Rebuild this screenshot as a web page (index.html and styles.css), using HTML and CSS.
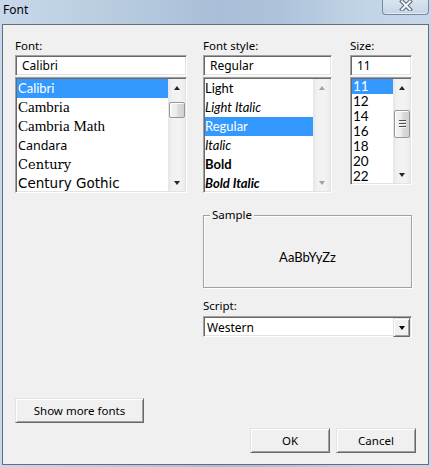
FILE: index.html
```html
<!DOCTYPE html>
<html>
<head>
<meta charset="utf-8">
<title>Font</title>
<link rel="stylesheet" href="styles.css">
</head>
<body>
<div class="window">
  <div class="titlebar">
    <span class="title">Font</span>
    <div class="close">
      <svg width="14" height="11" viewBox="0 0 14 11">
        <path d="M3 1.5 L11 9.5 M11 1.5 L3 9.5" stroke="#5b6778" stroke-width="4" stroke-linecap="square" fill="none"/>
        <path d="M3 1.5 L11 9.5 M11 1.5 L3 9.5" stroke="#f4f7fb" stroke-width="2" stroke-linecap="square" fill="none"/>
      </svg>
    </div>
  </div>
  <div class="panel">
    <div class="top">
      <div class="col col-font">
        <div class="lbl">Font:</div>
        <div class="field">Calibri</div>
        <div class="list list-font">
          <ul class="items">
            <li class="sel f-calibri">Calibri</li>
            <li class="f-cambria">Cambria</li>
            <li class="f-cambria">Cambria Math</li>
            <li class="f-candara">Candara</li>
            <li class="f-century">Century</li>
            <li class="f-gothic">Century Gothic</li>
          </ul>
          <div class="sb">
            <div class="sb-btn"><span class="arr-up"></span></div>
            <div class="sb-track"><div class="thumb thumb-font"></div></div>
            <div class="sb-btn"><span class="arr-down"></span></div>
          </div>
        </div>
      </div>
      <div class="right">
        <div class="pair">
          <div class="col col-style">
            <div class="lbl">Font style:</div>
            <div class="field">Regular</div>
            <div class="list list-style">
              <ul class="items items-style">
                <li class="w-light">Light</li>
                <li class="w-light it">Light Italic</li>
                <li class="sel">Regular</li>
                <li class="it">Italic</li>
                <li class="bold">Bold</li>
                <li class="bold it">Bold Italic</li>
              </ul>
              <div class="sb sb-disabled">
                <div class="sb-btn"><span class="arr-up"></span></div>
                <div class="sb-track"></div>
                <div class="sb-btn"><span class="arr-down"></span></div>
              </div>
            </div>
          </div>
          <div class="col col-size">
            <div class="lbl">Size:</div>
            <div class="field">11</div>
            <div class="list list-size">
              <ul class="items items-size">
                <li class="sel">11</li>
                <li>12</li>
                <li>14</li>
                <li>16</li>
                <li>18</li>
                <li>20</li>
                <li>22</li>
              </ul>
              <div class="sb">
                <div class="sb-btn"><span class="arr-up"></span></div>
                <div class="sb-track"><div class="thumb thumb-size"><span class="grip"></span></div></div>
                <div class="sb-btn"><span class="arr-down"></span></div>
              </div>
            </div>
          </div>
        </div>
        <div class="sample">
          <span class="legend">Sample</span>
          <span class="sample-text">AaBbYyZz</span>
        </div>
        <div class="lbl lbl-script">Script:</div>
        <div class="combo">
          <span class="combo-text">Western</span>
          <span class="combo-btn"><span class="arr-down"></span></span>
        </div>
      </div>
    </div>
    <div class="more-row"><button class="btn btn-more">Show more fonts</button></div>
    <div class="actions">
      <button class="btn btn-act">OK</button>
      <button class="btn btn-act">Cancel</button>
    </div>
  </div>
</div>
</body>
</html>
```

FILE: styles.css
```css
* { box-sizing: border-box; margin: 0; padding: 0; }
html, body { width: 431px; height: 467px; overflow: hidden; }
body {
  font-family: "Noto Sans", "Open Sans", sans-serif;
  font-size: 11.5px;
  color: #000;
  background: linear-gradient(90deg, #c7d8ea 0%, #b9cce0 25%, #a9bfd7 50%, #aec3da 65%, #c2d4e7 85%, #c6d7e9 100%);
}
.window { display: flex; flex-direction: column; height: 467px; }
.titlebar { position: relative; height: 24px; flex: none; }
.title { display: block; padding-left: 3px; line-height: 20px; font-size: 12px; }
.close {
  position: absolute; top: 0; right: 2px;
  width: 47px; height: 15px;
  border: 1px solid #7588a0; border-top: none;
  border-radius: 0 0 4px 4px;
  background: linear-gradient(#d9e5f1, #c5d5e6);
  box-shadow: inset 0 -1px 0 rgba(255,255,255,0.5);
  display: flex; justify-content: center; align-items: flex-start;
}
.close svg { display: block; }
.panel {
  flex: 1;
  margin: 0 2px 2px 2px;
  border: 1px solid #636e7c;
  background: #f0f0f0;
  padding: 13px 12px 0 12px;
  display: flex; flex-direction: column;
}
.top { display: flex; gap: 16px; }
.col-font { width: 172px; }
.right { width: 209px; display: flex; flex-direction: column; }
.pair { display: flex; gap: 18px; }
.col-style { width: 129px; }
.col-size { width: 62px; }
.lbl { height: 16px; line-height: 16px; margin-bottom: 1px; }
.field, .list, .combo {
  background: #fff;
  border: 1px solid;
  border-color: #a0a0a0 #fff #fff #a0a0a0;
  box-shadow: inset 1px 1px 0 #696969, inset -1px -1px 0 #e3e3e3;
}
.field {
  height: 21px; margin-bottom: 1px;
  padding-left: 6px; line-height: 19px; font-size: 12px;
}
.list { display: flex; padding: 1px; overflow: hidden; }
.list-font, .list-style { height: 116px; }
.list-size { height: 108px; }
.items { flex: 1; list-style: none; overflow: hidden; min-width: 0; }
.items li { height: 19px; line-height: 19px; padding-left: 1px; white-space: nowrap; }
.items li.sel { background: #3399ff; color: #fff; }
.f-calibri { font-family: Lato, sans-serif; font-size: 13px; }
.f-cambria { font-family: "Liberation Serif", serif; font-size: 15px; }
.f-candara { font-family: "Noto Sans", sans-serif; font-size: 12.5px; }
.f-century { font-family: "DejaVu Serif", serif; font-size: 13px; }
.f-gothic { font-family: "DejaVu Sans", sans-serif; font-size: 13.5px; }
.items-style li { font-family: Lato, sans-serif; font-size: 13px; padding-left: 0; }
.w-light { font-weight: 400; }
.it { font-style: italic; }
.bold { font-weight: 700; }
.items-size li { height: 15px; line-height: 15px; font-family: Lato, sans-serif; font-size: 13.5px; }
.sb {
  width: 17px; flex: none;
  display: flex; flex-direction: column;
  background: linear-gradient(90deg, #e6e6e6, #f1f1f1 25%, #f3f3f3 70%, #ebebeb);
}
.sb-btn { height: 17px; flex: none; display: flex; align-items: center; justify-content: center; }
.sb-track { flex: 1; }
.arr-up, .arr-down { width: 0; height: 0; border-left: 3.5px solid transparent; border-right: 3.5px solid transparent; }
.arr-up { border-bottom: 4px solid #262626; }
.arr-down { border-top: 4px solid #262626; }
.sb-disabled .arr-up { border-bottom-color: #a3a3a3; }
.sb-disabled .arr-down { border-top-color: #a3a3a3; }
.thumb {
  margin: 0 0 0 1px; width: 16px;
  border: 1px solid #979797; border-radius: 2px;
  background: linear-gradient(90deg, #f4f4f4, #ececec 45%, #dcdcdc 55%, #d0d0d0);
  box-shadow: inset 1px 1px 0 #fff;
  display: flex; align-items: center; justify-content: center;
}
.thumb-font { margin-top: 6px; height: 16px; }
.thumb-size { margin-top: 14px; height: 28px; }
.grip {
  width: 7px; height: 8px;
  background: repeating-linear-gradient(#4d4d4d 0 1px, #f7f7f7 1px 2px, transparent 2px 3px);
}
.sample {
  position: relative;
  margin-top: 22px; height: 73px;
  border: 1px solid #a0a0a0;
  box-shadow: 1px 1px 0 #fff, inset 1px 1px 0 #fff;
  display: flex; justify-content: center;
  padding-top: 33px;
}
.legend {
  position: absolute; top: -9px; left: 6px;
  padding: 0 2px; line-height: 16px; background: #f0f0f0;
}
.sample-text { font-family: Lato, sans-serif; font-size: 13px; line-height: 16px; height: 16px; }
.lbl-script { margin-top: 10px; margin-bottom: 2px; }
.combo { height: 21px; display: flex; padding: 1px; }
.combo-text { flex: 1; padding-left: 2px; line-height: 19px; font-size: 12px; }
.combo-btn {
  width: 17px; height: 19px;
  background: #f0f0f0;
  border: 1px solid; border-color: #e3e3e3 #696969 #696969 #e3e3e3;
  box-shadow: inset 1px 1px 0 #fff, inset -1px -1px 0 #a0a0a0;
  display: flex; align-items: center; justify-content: center;
}
.combo-btn .arr-down { border-top-color: #000; }
.more-row { margin-top: 61px; }
.btn {
  height: 25px;
  font-family: inherit; font-size: 11.5px; color: #000;
  background: #f0f0f0;
  border: 1px solid; border-color: #e3e3e3 #696969 #696969 #e3e3e3;
  box-shadow: inset 1px 1px 0 #fff, inset -1px -1px 0 #a0a0a0;
}
.btn-more { width: 129px; }
.actions { margin-top: 5px; display: flex; justify-content: flex-end; gap: 6px; }
.btn-act { width: 80px; }
```
